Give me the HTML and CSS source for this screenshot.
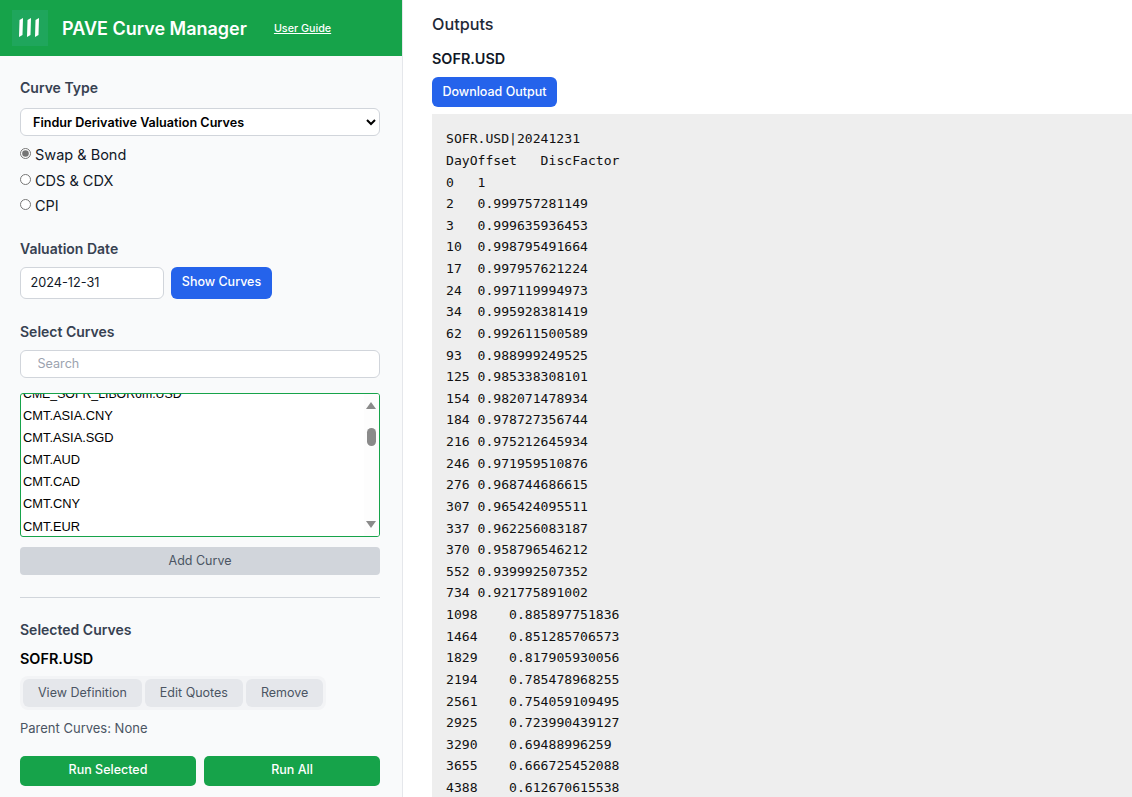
FILE: index.html
```html
<!DOCTYPE html>
<html lang="en">
<head>
    <meta charset="UTF-8">
    <title>PAVE Curve Manager</title>
    <link rel="stylesheet" href="styles.css">
</head>
<body>
    <div class="app">
        <aside class="sidebar">
            <header class="brand">
                <div class="logo">
                    <svg width="36" height="36" viewBox="0 0 36 36">
                        <path d="M7.5 10 L11 8 L10.5 25 L7 27 Z" fill="#fff"/>
                        <path d="M15.5 10 L19 8 L18.5 25 L15 27 Z" fill="#fff"/>
                        <path d="M23.5 10 L27 8 L26.5 25 L23 27 Z" fill="#fff"/>
                    </svg>
                </div>
                <h1>PAVE Curve Manager</h1>
                <a class="guide" href="#">User Guide</a>
            </header>

            <div class="panel">
                <h2 class="first">Curve Type</h2>
                <select class="type-select">
                    <option>Findur Derivative Valuation Curves</option>
                </select>
                <div class="radios">
                    <label><input type="radio" name="kind" checked> Swap &amp; Bond</label>
                    <label><input type="radio" name="kind"> CDS &amp; CDX</label>
                    <label><input type="radio" name="kind"> CPI</label>
                </div>

                <h2 class="date-title">Valuation Date</h2>
                <div class="date-row">
                    <input class="date-input" type="text" value="2024-12-31">
                    <button class="btn blue">Show Curves</button>
                </div>

                <h2 class="select-title">Select Curves</h2>
                <input class="search" type="text" placeholder="Search">

                <div class="listbox">
                    <ul class="curves">
                        <li class="clipped">CME_SOFR_LIBOR6m.USD</li>
                        <li>CMT.ASIA.CNY</li>
                        <li>CMT.ASIA.SGD</li>
                        <li>CMT.AUD</li>
                        <li>CMT.CAD</li>
                        <li>CMT.CNY</li>
                        <li>CMT.EUR</li>
                    </ul>
                    <div class="scrollbar">
                        <span class="arrow up"></span>
                        <span class="thumb"></span>
                        <span class="arrow down"></span>
                    </div>
                </div>
                <button class="btn add">Add Curve</button>

                <hr>

                <h2 class="selected-title">Selected Curves</h2>
                <div class="curve-name">SOFR.USD</div>
                <div class="curve-actions">
                    <button>View Definition</button>
                    <button>Edit Quotes</button>
                    <button>Remove</button>
                </div>
                <p class="parents">Parent Curves: None</p>
                <div class="run-row">
                    <button class="btn green">Run Selected</button>
                    <button class="btn green">Run All</button>
                </div>
            </div>
        </aside>

        <main class="outputs">
            <h2 class="outputs-title">Outputs</h2>
            <div class="output-name">SOFR.USD</div>
            <button class="btn blue download">Download Output</button>
<pre class="output">SOFR.USD|20241231
DayOffset	DiscFactor
0	1
2	0.999757281149
3	0.999635936453
10	0.998795491664
17	0.997957621224
24	0.997119994973
34	0.995928381419
62	0.992611500589
93	0.988999249525
125	0.985338308101
154	0.982071478934
184	0.978727356744
216	0.975212645934
246	0.971959510876
276	0.968744686615
307	0.965424095511
337	0.962256083187
370	0.958796546212
552	0.939992507352
734	0.921775891002
1098	0.885897751836
1464	0.851285706573
1829	0.817905930056
2194	0.785478968255
2561	0.754059109495
2925	0.723990439127
3290	0.69488996259
3655	0.666725452088
4388	0.612670615538</pre>
        </main>
    </div>
</body>
</html>
```

FILE: styles.css
```css
* {
    box-sizing: border-box;
}
html, body {
    height: 100%;
    margin: 0;
    overflow: hidden;
}
body {
    font-family: Inter, "Liberation Sans", sans-serif;
    color: #111827;
    background-color: #fff;
}
button, input, select {
    font-family: inherit;
}
.app {
    display: flex;
    height: 797px;
}
.sidebar {
    width: 403px;
    flex-shrink: 0;
    background-color: #f9fafb;
    border-right: 1px solid #e5e7eb;
    overflow: hidden;
}
.brand {
    display: flex;
    align-items: center;
    height: 56px;
    padding: 0 12px;
    background-color: #16a34a;
    color: #fff;
}
.logo {
    width: 36px;
    height: 36px;
    margin-right: 14px;
    background-color: #1fa65c;
}
.logo svg {
    display: block;
}
.brand h1 {
    margin: 0;
    font-size: 18px;
    font-weight: 600;
}
.guide {
    margin-left: 27px;
    margin-top: 1px;
    font-size: 10.75px;
    font-weight: 500;
    color: #fff;
}
.panel {
    padding: 0 22px 0 20px;
}
h2 {
    margin: 0;
    font-size: 14px;
    line-height: 20px;
    font-weight: 600;
    color: #374151;
}
.first {
    margin-top: 22px;
}
.type-select {
    display: block;
    width: 100%;
    height: 28px;
    margin-top: 10px;
    padding: 0 8px;
    font-size: 12.6px;
    font-weight: 600;
    color: #000;
    background-color: #fff;
    border: 1px solid #d1d5db;
    border-radius: 6px;
}
.radios {
    margin-top: 6px;
}
.radios label {
    display: flex;
    align-items: center;
    height: 25.5px;
    font-size: 14.5px;
    color: #111827;
}
.radios input {
    width: 11px;
    height: 11px;
    margin: 0 4px 2px 0;
    accent-color: #757575;
}
.date-title {
    margin-top: 20px;
}
.date-row {
    display: flex;
    gap: 7px;
    margin-top: 8px;
}
.date-input {
    width: 144px;
    height: 32px;
    padding: 0 9.5px;
    font-size: 12.7px;
    color: #111827;
    background-color: #fff;
    border: 1px solid #d1d5db;
    border-radius: 6px;
}
.btn {
    border: none;
    border-radius: 6px;
    font-size: 12.5px;
    font-weight: 500;
    color: #fff;
    cursor: pointer;
}
.blue {
    background-color: #2563eb;
}
.date-row .btn {
    width: 101px;
    height: 32px;
    padding: 0 0 3px;
}
.select-title {
    margin-top: 23px;
}
.search {
    display: block;
    width: 100%;
    height: 28px;
    margin-top: 8px;
    padding: 0 16.5px;
    font-size: 12.6px;
    background-color: #fff;
    border: 1px solid #d1d5db;
    border-radius: 6px;
}
.search::placeholder {
    color: #9ca3af;
}
.listbox {
    display: flex;
    height: 144px;
    margin-top: 15px;
    background-color: #fff;
    border: 1px solid #16a34a;
    border-radius: 3px;
    overflow: hidden;
}
.curves {
    flex: 1;
    margin: -11px 0 0;
    padding: 0 0 0 2px;
    list-style: none;
    font-family: "Liberation Sans", Arial, sans-serif;
    font-size: 12.85px;
    color: #000;
}
.curves li {
    height: 22px;
    line-height: 22px;
}
.curves li:last-child {
    margin-top: 1px;
}
.curves .clipped {
    font-size: 12.3px;
}
.scrollbar {
    position: relative;
    width: 15px;
    background-color: #fdfdfd;
}
.arrow {
    position: absolute;
    left: 2px;
    width: 0;
    height: 0;
    border-left: 5px solid transparent;
    border-right: 5px solid transparent;
}
.up {
    top: 8px;
    border-bottom: 7px solid #8a8a8a;
}
.down {
    bottom: 8px;
    border-top: 7px solid #8a8a8a;
}
.thumb {
    position: absolute;
    top: 34px;
    left: 3px;
    width: 9px;
    height: 18px;
    background-color: #8a8a8a;
    border-radius: 5px;
}
.add {
    display: block;
    width: 100%;
    height: 28px;
    margin-top: 10px;
    border-radius: 4px;
    font-weight: 400;
    color: #4b5563;
    background-color: #d1d5db;
}
hr {
    height: 1px;
    margin: 22px 0 0;
    border: none;
    background-color: #d1d5db;
}
.selected-title {
    margin-top: 22px;
}
.curve-name {
    margin-top: 9px;
    font-size: 14.4px;
    line-height: 20px;
    font-weight: 600;
    color: #000;
}
.curve-actions {
    display: inline-flex;
    gap: 3px;
    margin-top: 7px;
    padding: 3px;
    background-color: #f3f4f6;
    border-radius: 8px;
}
.curve-actions button {
    height: 28px;
    padding: 0 15px;
    font-size: 12.5px;
    color: #4b5563;
    background-color: #e5e7eb;
    border: none;
    border-radius: 6px;
}
.parents {
    margin: 8px 0 0;
    font-size: 13px;
    line-height: 20px;
    color: #4b5563;
}
.run-row {
    display: flex;
    gap: 8px;
    margin-top: 18px;
}
.green {
    flex: 1;
    height: 30px;
    padding-bottom: 3px;
    border-radius: 5px;
    font-weight: 500;
    background-color: #16a34a;
}
.outputs {
    flex: 1;
    min-width: 0;
    padding: 0 0 0 29px;
    overflow: hidden;
}
.outputs-title {
    margin-top: 13px;
    font-size: 16.2px;
    line-height: 22px;
    font-weight: 500;
    color: #1f2937;
}
.output-name {
    margin-top: 14px;
    font-size: 14.4px;
    line-height: 20px;
    font-weight: 600;
    color: #111827;
}
.download {
    display: block;
    width: 125px;
    height: 30px;
    margin-top: 8px;
    padding: 0 0 2px;
}
.output {
    margin: 7px 0 0;
    padding: 14.3px 14px;
    font-family: "DejaVu Sans Mono", monospace;
    font-size: 13.1px;
    line-height: 21.63px;
    tab-size: 4;
    color: #111;
    background-color: #eee;
}
```
